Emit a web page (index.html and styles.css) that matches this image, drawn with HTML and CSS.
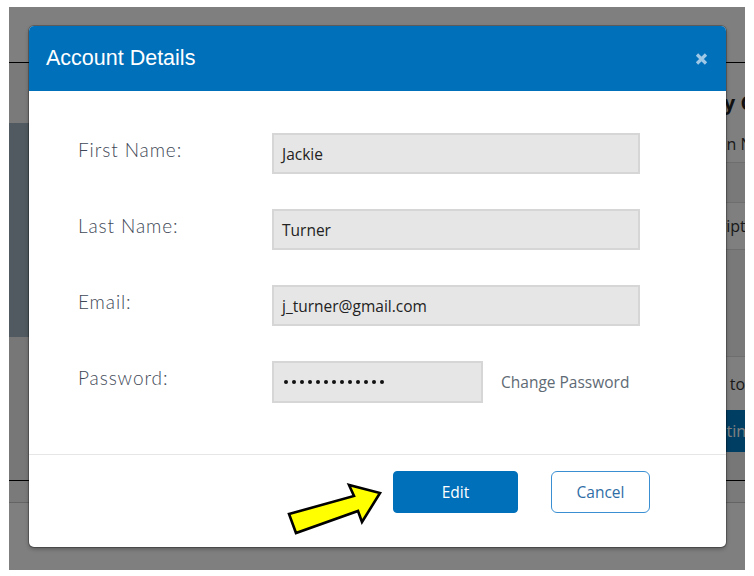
FILE: index.html
```html
<!DOCTYPE html>
<html lang="en">
<head>
<meta charset="utf-8">
<title>Account Details</title>
<link rel="stylesheet" href="styles.css">
</head>
<body>
<div class="frame">
  <div class="page">
    <header class="page-header"></header>
    <div class="page-main">
      <aside class="side">
        <div class="side-gap"></div>
        <div class="side-banner"></div>
        <div class="side-rest"></div>
      </aside>
      <section class="checkout">
        <div class="co-title"><span class="co-title-text">Pay by Card</span></div>
        <div class="co-row co-name"><span class="co-text">Plan Name</span></div>
        <div class="co-box"></div>
        <div class="co-row co-sub"><span class="co-text">Subscription Type</span></div>
        <div class="co-area"></div>
        <div class="co-agree"><span class="co-text">I agree to terms</span></div>
        <div class="co-btn">Continue</div>
        <div class="co-rest"></div>
      </section>
    </div>
    <footer class="page-footer">
      <div class="footer-band"></div>
      <div class="footer-rest"></div>
    </footer>

    <div class="overlay"></div>

    <div class="modal" role="dialog" aria-labelledby="modal-title">
      <div class="modal-header">
        <h1 class="modal-title" id="modal-title">Account Details</h1>
        <button class="modal-close" type="button" aria-label="Close">
          <svg width="13" height="12" viewBox="0 0 13 12"><path d="M2 1.5 L11 10.5 M11 1.5 L2 10.5" stroke="currentColor" stroke-width="3.2" stroke-linecap="butt"/></svg>
        </button>
      </div>
      <div class="modal-body">
        <label class="field-label">First Name:</label>
        <div class="input">Jackie</div>
        <label class="field-label">Last Name:</label>
        <div class="input">Turner</div>
        <label class="field-label">Email:</label>
        <div class="input">j_turner@gmail.com</div>
        <label class="field-label">Password:</label>
        <div class="pw-row">
          <div class="input pw">
            <span class="dot"></span><span class="dot"></span><span class="dot"></span><span class="dot"></span><span class="dot"></span><span class="dot"></span><span class="dot"></span><span class="dot"></span><span class="dot"></span><span class="dot"></span><span class="dot"></span><span class="dot"></span><span class="dot"></span>
          </div>
          <a class="change-pw">Change Password</a>
        </div>
      </div>
      <div class="modal-footer">
        <button class="btn btn-primary" type="button">Edit</button>
        <button class="btn btn-outline" type="button">Cancel</button>
      </div>
    </div>

    <svg class="pointer-arrow" width="110" height="62" viewBox="0 0 110 62">
      <polygon points="9,36 74,18 69,7 100,15 82,44 78,33 16,55" fill="#ffff00" stroke="#000" stroke-width="2.6" stroke-linejoin="miter"/>
    </svg>
  </div>
</div>
</body>
</html>
```

FILE: styles.css
```css
html, body {
  margin: 0;
  padding: 0;
  background: #fff;
}

.frame {
  padding: 7px 9px 6px 9px;
}

.page {
  position: relative;
  width: 736px;
  height: 563px;
  overflow: hidden;
  background: #fff;
  display: flex;
  flex-direction: column;
  font-family: "Open Sans", "Liberation Sans", sans-serif;
}

/* ---------- background page (behind overlay) ---------- */
.page-header {
  flex: none;
  height: 55px;
  border-bottom: 1px solid #000;
  background: #fff;
}

.page-main {
  flex: none;
  height: 417px;
  display: grid;
  grid-template-columns: 1fr 120px;
}

.side {
  display: flex;
  flex-direction: column;
}

.side-gap {
  height: 60px;
  background: #f4f4f4;
}

.side-banner {
  height: 214px;
  background: #a0b4c0;
}

.side-rest {
  flex: 1;
  background: #eeeeee;
}

.checkout {
  display: flex;
  flex-direction: column;
  background: #fff;
  white-space: nowrap;
  color: #333;
}

.co-title {
  height: 62px;
  box-sizing: border-box;
  padding: 28px 0 0 45px;
}

.co-title-text {
  font-weight: 700;
  font-size: 20px;
  line-height: 24px;
  color: #222;
}

.co-text {
  font-size: 16px;
  line-height: 22px;
}

.co-row {
  display: flex;
  align-items: center;
  border-bottom: 1px solid #dcdcdc;
}

.co-name {
  height: 37px;
  padding-left: 79px;
}

.co-box {
  height: 39px;
  border-bottom: 1px solid #dcdcdc;
  background: #f2f2f2;
}

.co-sub {
  height: 46px;
  padding-left: 51px;
}

.co-area {
  height: 106px;
  border-bottom: 1px solid #dcdcdc;
  background: #f2f2f2;
}

.co-agree {
  height: 53px;
  display: flex;
  align-items: center;
  padding-left: 50px;
}

.co-btn {
  height: 42px;
  margin-left: 15px;
  padding-left: 57px;
  display: flex;
  align-items: center;
  background: #007cc8;
  color: #fff;
  font-size: 16px;
}

.co-rest {
  flex: 1;
  background: #eee;
}

.page-footer {
  flex: 1;
  display: flex;
  flex-direction: column;
  border-top: 1px solid #000;
}

.footer-band {
  height: 21px;
  background: #f4f4f4;
  border-bottom: 1px solid #c8c8c8;
}

.footer-rest {
  flex: 1;
  background: #fff;
}

.overlay {
  position: absolute;
  inset: 0;
  background: rgba(0, 0, 0, 0.5);
}

/* ---------- modal ---------- */
.modal {
  position: absolute;
  left: 20px;
  top: 19px;
  width: 697px;
  background: #fff;
  border-radius: 5px;
  overflow: hidden;
  box-shadow: 0 0 0 1px rgba(0, 0, 0, 0.25), 0 2px 4px rgba(0, 0, 0, 0.3);
}

.modal-header {
  height: 65px;
  box-sizing: border-box;
  padding: 0 18px 0 17px;
  display: flex;
  align-items: center;
  justify-content: space-between;
  background: #0070ba;
}

.modal-title {
  margin: 0;
  font-family: "Liberation Sans", Arial, sans-serif;
  font-weight: 400;
  font-size: 21.5px;
  color: #fff;
}

.modal-close {
  padding: 0;
  margin: 0;
  border: 0;
  background: none;
  color: #9fc7e6;
  display: flex;
  line-height: 0;
}

.modal-body {
  padding: 42px 0 51px 49px;
  display: grid;
  grid-template-columns: 194px 368px;
  grid-template-rows: 41px 41px 41px 42px;
  row-gap: 35px;
}

.field-label {
  padding-top: 5px;
  font-family: "Lato", "Open Sans", sans-serif;
  font-weight: 300;
  font-size: 19px;
  line-height: 24px;
  letter-spacing: 0.9px;
  color: #3e4856;
}

.input {
  box-sizing: border-box;
  height: 41px;
  padding: 0 8px;
  display: flex;
  align-items: center;
  background: #e6e6e6;
  border: 2px solid #d6d6d6;
  font-size: 15.5px;
  color: #222;
}

.pw-row {
  display: flex;
  align-items: center;
  gap: 18px;
}

.input.pw {
  width: 211px;
  height: 42px;
  gap: 4px;
  padding-left: 10px;
}

.dot {
  width: 4px;
  height: 4px;
  border-radius: 50%;
  background: #111;
}

.change-pw {
  font-size: 15.5px;
  color: #5e6a74;
}

.modal-footer {
  border-top: 1px solid #e6e6e6;
  padding: 16px 76px 34px 0;
  display: flex;
  justify-content: flex-end;
  gap: 33px;
}

.btn {
  height: 42px;
  box-sizing: border-box;
  font-family: "Open Sans", sans-serif;
  font-size: 15.5px;
  border-radius: 4px;
  cursor: pointer;
}

.btn-primary {
  width: 125px;
  background: #0070ba;
  border: 1px solid #0070ba;
  color: #fff;
}

.btn-outline {
  width: 99px;
  background: #fff;
  border: 1px solid #3a8fd3;
  border-radius: 6px;
  color: #2f6ea6;
}

.pointer-arrow {
  position: absolute;
  left: 271px;
  top: 471px;
}
```
